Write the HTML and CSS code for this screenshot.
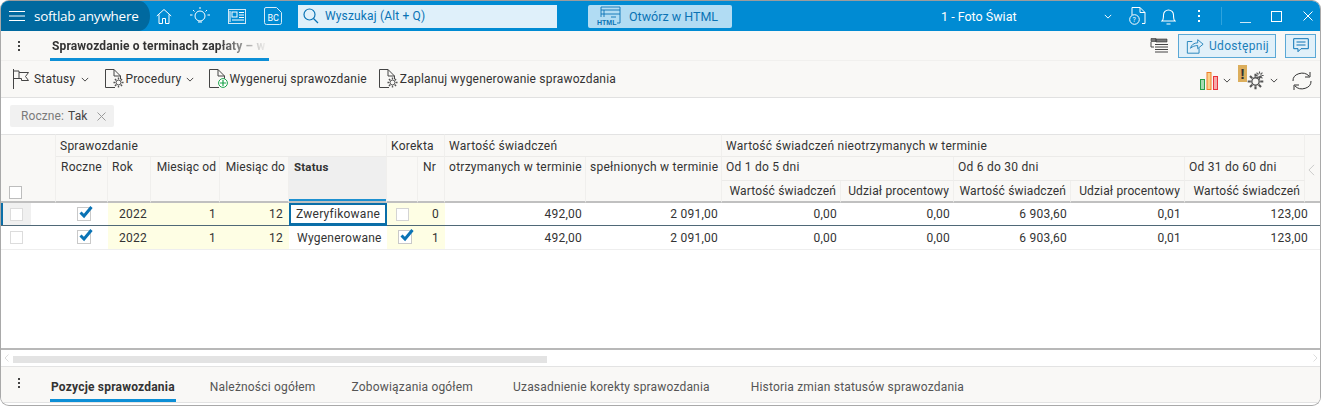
FILE: index.html
```html
<!DOCTYPE html>
<html lang="pl">
<head>
<meta charset="utf-8">
<title>Sprawozdanie o terminach zapłaty</title>
<link rel="stylesheet" href="styles.css">
</head>
<body>
<svg class="defs" width="0" height="0">
  <symbol id="cb-on" viewBox="0 0 18 18">
    <rect x="1.5" y="3.5" width="13" height="13" fill="#fff" stroke="#c9c9c9"/>
    <path d="M4.5 8.500l3.500 3.500L15.500 3" fill="none" stroke="#0a73b5" stroke-width="3"/>
  </symbol>
  <symbol id="chev" viewBox="0 0 10 6">
    <path d="M1 1l4 4 4-4" fill="none" stroke="currentColor" stroke-width="1.2"/>
  </symbol>
  <symbol id="doc" viewBox="0 0 18 20">
    <path d="M10 18.500H.5V.5H9L15.500 7v3M9 .5V7h6.500" fill="none" stroke="#444" stroke-width="1"/>
  </symbol>
  <symbol id="gear" viewBox="0 0 12 12">
    <circle cx="6" cy="6" r="2.600" fill="none" stroke="#555" stroke-width="1"/>
    <path d="M6 .5v2.200M6 9.300v2.200M.5 6h2.200M9.300 6h2.200M2.100 2.100l1.600 1.600M8.300 8.300l1.600 1.600M2.100 9.900l1.600-1.600M8.300 3.700l1.600-1.600" stroke="#555" stroke-width="1.500"/>
  </symbol>
</svg>

<div class="window">
  <header class="titlebar">
    <div class="brand">
      <svg class="burger" width="16" height="12" viewBox="0 0 16 12"><path d="M0 1.500h16M0 6h16M0 10.500h16" stroke="#fff" stroke-width="1.200"/></svg>
      <span class="brand-name">softlab anywhere</span>
    </div>
    <nav class="nav-icons">
      <svg class="ni ni-home" width="16" height="17" viewBox="0 0 16 17"><path d="M.8 8L8 1.500 15.200 8M3 6.500v9h3.500v-5h3v5H13v-9" fill="none" stroke="#fff"/></svg>
      <svg class="ni ni-bulb" width="20" height="18" viewBox="0 0 20 18"><circle cx="10" cy="9" r="5" fill="none" stroke="#fff"/><path d="M8 15h4M10 0v2M3 3l1.500 1.500M17 3l-1.500 1.500M0 8h2.500M17.500 8H20" stroke="#fff"/></svg>
      <svg class="ni ni-news" width="18" height="15" viewBox="0 0 18 15"><rect x=".5" y=".5" width="17" height="14" fill="none" stroke="#cfe8f6"/><rect x="4" y="3" width="5" height="5" fill="none" stroke="#fff"/><path d="M2 2v11M11 3.500h5M11 6h5M11 8.500h5M4 11h12" stroke="#fff"/></svg>
      <svg class="ni ni-bc" width="18" height="18" viewBox="0 0 18 18"><path d="M2 .5h10.500l5 5v10a2 2 0 0 1-2 2h-13a2 2 0 0 1-2-2V2A1.500 1.500 0 0 1 2 .5z" fill="none" stroke="#d5ecf8"/><text x="3.500" y="14" class="bc-text">BC</text></svg>
    </nav>
    <div class="search">
      <svg width="16" height="16" viewBox="0 0 16 16"><circle cx="6.500" cy="6.500" r="5.500" fill="none" stroke="#0a73b5" stroke-width="1.200"/><path d="M10.500 10.500L15 15" stroke="#0a73b5" stroke-width="1.200"/></svg>
      <span>Wyszukaj (Alt + Q)</span>
    </div>
    <div class="html-btn">
      <svg width="24" height="20" viewBox="0 0 24 20"><path d="M4 11V1h19v16h-3M4 4h19M7 4v7M4 8h19M14 11h5" fill="none" stroke="#0a73b5" stroke-width=".9"/><text x="0" y="19" class="html-text">HTML</text></svg>
      <span>Otwórz w HTML</span>
    </div>
    <div class="company">1 - Foto Świat</div>
    <div class="win-tools">
      <svg class="company-chev" width="8" height="5"><use href="#chev"/></svg>
      <svg class="wt-doc" width="17" height="18" viewBox="0 0 17 18"><path d="M3 8V.5h8l5 5v11h-3M11 .5v5h5" fill="none" stroke="#fff"/><circle cx="5.500" cy="12.500" r="4.800" fill="none" stroke="#fff"/><text x="3.600" y="15.200" class="q-text">?</text></svg>
      <svg class="wt-bell" width="15" height="19" viewBox="0 0 15 19"><path d="M1 14c1.500-1 1.500-3 1.500-6a5 5 0 0 1 10 0c0 3 0 5 1.500 6H1zM5.500 17h4" fill="none" stroke="#fff" stroke-width="1.100"/></svg>
      <span class="wt-dots"></span>
      <span class="wt-sep"></span>
      <svg class="wt-min" width="11" height="11" viewBox="0 0 11 11"><path d="M0 10.500h11" stroke="#cfe8f6"/></svg>
      <svg class="wt-max" width="11" height="11" viewBox="0 0 11 11"><rect x=".5" y=".5" width="10" height="10" fill="none" stroke="#fff"/></svg>
      <svg class="wt-close" width="10" height="10" viewBox="0 0 10 10"><path d="M.5.500l9 9M9.500.500l-9 9" stroke="#fff"/></svg>
    </div>
  </header>

  <div class="tabrow">
    <span class="vdots vdots-top"></span>
    <div class="doc-tab"><span class="doc-tab-text">Sprawozdanie o terminach zapłaty – w</span></div>
    <div class="tabrow-right">
      <svg class="list-ic" width="18" height="15" viewBox="0 0 18 15"><path d="M1 .5h5v3H1zM6 1h11v3H6z" fill="#777" stroke="#333" stroke-width=".6"/><path d="M1 4v5h3M5 6.500h13M5 9h13M5 11.500h13M5 14h13" fill="none" stroke="#444"/></svg>
      <button class="share-btn">
        <svg width="18" height="16" viewBox="0 0 20 17"><path d="M7 3.500H1.500v13h13V11" fill="none" stroke="#1b7fb9"/><path d="M5 11c1-4 4-6 8-6V1.500l6 5-6 5V8c-3 0-6 1-8 3z" fill="none" stroke="#1b7fb9"/></svg>
        <span>Udostępnij</span>
      </button>
      <button class="chat-btn">
        <svg width="16" height="15" viewBox="0 0 16 15"><path d="M.7.700h14.600v10H8l-3 3v-3H.7z" fill="none" stroke="#0a73b5"/><path d="M3.500 4h9M3.500 7h9" stroke="#0a73b5"/></svg>
      </button>
    </div>
  </div>

  <div class="toolbar">
    <div class="tb-item tb-statusy">
      <svg width="18" height="20" viewBox="0 0 18 20"><path d="M1.500 0v20M1.500 2h5.500v1.500h9.500l-3 4 3 4H9.500V9.500H1.500M7 3.500v6" fill="none" stroke="#444"/></svg>
      <span class="tb-label">Statusy</span>
      <svg class="tb-chev" width="8" height="5"><use href="#chev"/></svg>
    </div>
    <div class="tb-item tb-proc">
      <span class="doc-ic"><svg width="18" height="20"><use href="#doc"/></svg><svg class="doc-badge" width="11" height="11"><use href="#gear"/></svg></span>
      <span class="tb-label">Procedury</span>
      <svg class="tb-chev" width="8" height="5"><use href="#chev"/></svg>
    </div>
    <div class="tb-item tb-gen">
      <span class="doc-ic"><svg width="18" height="20"><use href="#doc"/></svg><svg class="doc-badge" width="10" height="10" viewBox="0 0 10 10"><circle cx="5" cy="5" r="4.400" fill="#fff" stroke="#1aa34a"/><path d="M5 2v6M2 5h6" stroke="#1aa34a" stroke-width="1.200"/></svg></span>
      <span class="tb-label">Wygeneruj sprawozdanie</span>
    </div>
    <div class="tb-item tb-plan">
      <span class="doc-ic"><svg width="18" height="20"><use href="#doc"/></svg><svg class="doc-badge" width="11" height="11"><use href="#gear"/></svg></span>
      <span class="tb-label">Zaplanuj wygenerowanie sprawozdania</span>
    </div>
    <div class="tb-right">
      <svg class="bars" width="18" height="18" viewBox="0 0 18 18"><rect x=".5" y="7.500" width="4" height="10" fill="#a5dbb3" stroke="#27a048"/><rect x="7" y=".5" width="4" height="17" fill="#fbd08a" stroke="#ee7f2a"/><rect x="13.500" y="4.500" width="4" height="13" fill="#f7a8a8" stroke="#e8323c"/></svg>
      <svg class="tb-chev chev-bars" width="8" height="5"><use href="#chev"/></svg>
      <span class="alert-ic">
        <span class="alert-mark">!</span>
        <svg class="gear-big" width="17" height="17"><use href="#gear"/></svg>
        <svg class="gear-small" width="9" height="9"><use href="#gear"/></svg>
      </span>
      <svg class="tb-chev chev-alert" width="8" height="5"><use href="#chev"/></svg>
      <svg class="refresh" width="20" height="20" viewBox="0 0 20 20"><path d="M1 10a9 7.500 0 0 1 16-5M19 10a9 7.500 0 0 1-16 5" fill="none" stroke="#333"/><path d="M18 1v5h-5M2 19v-5h5" fill="none" stroke="#333"/></svg>
    </div>
  </div>

  <div class="filters">
    <div class="chip"><span class="chip-key">Roczne:</span> <span class="chip-val">Tak</span>
      <svg width="9" height="9" viewBox="0 0 9 9"><path d="M.5.500l8 8M8.500.500l-8 8" stroke="#9a9a9a"/></svg>
    </div>
  </div>

  <div class="grid-area">
    <table class="grid">
      <colgroup>
        <col class="c30"><col class="c25"><col class="c52"><col class="c43"><col class="c69"><col class="c69"><col class="c98"><col class="c31"><col class="c27"><col class="c141"><col class="c136"><col class="c119"><col class="c113"><col class="c117"><col class="c114"><col class="c120"><col class="c15">
      </colgroup>
      <thead>
        <tr class="h1">
          <th colspan="2" rowspan="3" class="selhead"><span class="cb cb-head"></span></th>
          <th colspan="5">Sprawozdanie</th>
          <th colspan="2">Korekta</th>
          <th colspan="2">Wartość świadczeń</th>
          <th colspan="5">Wartość świadczeń nieotrzymanych w terminie</th>
          <th rowspan="3" class="scroll-cell"><svg width="7" height="12" viewBox="0 0 8 14"><path d="M7 1L1 7l6 6" fill="none" stroke="#c4c4c4"/></svg></th>
        </tr>
        <tr class="h2">
          <th rowspan="2" class="ct">Roczne</th>
          <th rowspan="2">Rok</th>
          <th rowspan="2" class="ar tight">Miesiąc od</th>
          <th rowspan="2" class="ar tight">Miesiąc do</th>
          <th rowspan="2" class="status-head">Status</th>
          <th rowspan="2"></th>
          <th rowspan="2" class="ar nr-head">Nr</th>
          <th rowspan="2">otrzymanych w terminie</th>
          <th rowspan="2">spełnionych w terminie</th>
          <th colspan="2">Od 1 do 5 dni</th>
          <th colspan="2">Od 6 do 30 dni</th>
          <th>Od 31 do 60 dni</th>
        </tr>
        <tr class="h3">
          <th class="ar">Wartość świadczeń</th>
          <th class="ar">Udział procentowy</th>
          <th class="ar">Wartość świadczeń</th>
          <th class="ar">Udział procentowy</th>
          <th class="ar">Wartość świadczeń</th>
        </tr>
      </thead>
      <tbody>
        <tr class="row-active">
          <td class="sel sel-active"><span class="cb"></span></td>
          <td></td>
          <td class="ct"><svg class="cbx" width="18" height="18"><use href="#cb-on"/></svg></td>
          <td class="ar yel">2022</td>
          <td class="ar yel">1</td>
          <td class="ar yel pad6">12</td>
          <td class="status-focus">Zweryfikowane</td>
          <td class="ct yel"><span class="cb cb-row"></span></td>
          <td class="ar yel pad6">0</td>
          <td class="ar">492,00</td>
          <td class="ar">2 091,00</td>
          <td class="ar">0,00</td>
          <td class="ar">0,00</td>
          <td class="ar">6 903,60</td>
          <td class="ar">0,01</td>
          <td colspan="2" class="ar lastcell">123,00</td>
        </tr>
        <tr class="row-plain">
          <td class="sel"><span class="cb"></span></td>
          <td></td>
          <td class="ct"><svg class="cbx" width="18" height="18"><use href="#cb-on"/></svg></td>
          <td class="ar yel">2022</td>
          <td class="ar yel">1</td>
          <td class="ar yel pad6">12</td>
          <td class="status">Wygenerowane</td>
          <td class="ct yel"><svg class="cbx" width="18" height="18"><use href="#cb-on"/></svg></td>
          <td class="ar yel pad6">1</td>
          <td class="ar">492,00</td>
          <td class="ar">2 091,00</td>
          <td class="ar">0,00</td>
          <td class="ar">0,00</td>
          <td class="ar">6 903,60</td>
          <td class="ar">0,01</td>
          <td colspan="2" class="ar lastcell">123,00</td>
        </tr>
      </tbody>
    </table>
  </div>

  <div class="hscroll">
    <svg width="5" height="8" viewBox="0 0 5 8"><path d="M4.500.500L1 4l3.500 3.500" fill="none" stroke="#ddd"/></svg>
    <div class="hscroll-track"><div class="hscroll-thumb"></div></div>
    <svg width="5" height="8" viewBox="0 0 5 8"><path d="M.5.500L4 4 .5 7.500" fill="none" stroke="#ddd"/></svg>
  </div>

  <div class="subtabs">
    <span class="vdots vdots-bottom"></span>
    <span class="subtab subtab-active">Pozycje sprawozdania</span>
    <span class="subtab subtab-receivables">Należności ogółem</span>
    <span class="subtab subtab-liabilities">Zobowiązania ogółem</span>
    <span class="subtab subtab-reason">Uzasadnienie korekty sprawozdania</span>
    <span class="subtab">Historia zmian statusów sprawozdania</span>
  </div>
</div>
</body>
</html>
```
FILE: styles.css
```css
* { box-sizing: border-box; }
html, body { margin: 0; padding: 0; height: 406px; overflow: hidden; background: #fff; }
body { font-family: Roboto, "Liberation Sans", sans-serif; font-size: 12px; color: #333; }
.defs { position: absolute; }
svg { display: block; flex: none; }
button { font: inherit; margin: 0; }

.window {
  height: 406px;
  border: 1px solid #a9a9a9;
  border-top-color: #9c9c9c;
  border-radius: 9px;
  overflow: hidden;
  display: flex;
  flex-direction: column;
  background: #fff;
}

/* title bar */
.titlebar { height: 30px; flex: none; background: #008bd3; display: flex; align-items: center; color: #fff; }
.brand {
  width: 149px; height: 30px; flex: none;
  background: #00699f;
  border-radius: 0 22px 22px 0 / 0 30px 30px 0;
  display: flex; align-items: center; padding-left: 8px;
}
.brand-name { font-family: "Open Sans", sans-serif; font-size: 13.500px; margin-left: 9px; letter-spacing: -.25px; white-space: nowrap; }
.nav-icons { display: flex; align-items: center; width: 148px; flex: none; padding-left: 6px; }
.ni-bulb { margin-left: 18px; }
.ni-news { margin-left: 18px; }
.ni-bc { margin-left: 18px; }
.bc-text { font: 9px Roboto, sans-serif; fill: #fff; }
.search {
  width: 259px; height: 23px; flex: none; background: #dff0fa;
  display: flex; align-items: center; padding-left: 5px; gap: 6px;
  color: #0a73b5; font-size: 12px; letter-spacing: .15px;
}
.html-btn {
  width: 144px; height: 23px; flex: none; margin-left: 31px; background: #b1dcf3;
  border-radius: 2px; display: flex; align-items: center; padding-left: 9px; gap: 8px;
  color: #0a73b5; font-size: 12.500px;
}
.html-text { font: bold 7px "Liberation Sans", sans-serif; fill: #0a73b5; }
.company { width: 418px; flex: none; padding-left: 209px; font-size: 12.500px; color: #fff; }
.win-tools { display: flex; align-items: center; flex: 1; }
.company-chev { color: #fff; margin-left: -46px; }
.wt-doc { margin-left: 17px; }
.wt-bell { margin-left: 15px; }
.wt-dots { width: 2px; height: 2px; margin-left: 22px; background: #fff; box-shadow: 0 -5px 0 #fff, 0 5px 0 #fff; }
.wt-sep { width: 1px; height: 18px; margin-left: 21px; background: #2ea3dd; }
.wt-min { margin-left: 18px; margin-top: 3px; }
.wt-max { margin-left: 20px; }
.wt-close { margin-left: 21px; }
.q-text { font: 7px Roboto, sans-serif; fill: #fff; }

/* document tab row */
.tabrow { height: 30px; flex: none; background: #f9f8f6; display: flex; align-items: center; border-bottom: 1px solid #f1f0ee; }
.vdots { display: block; flex: none; width: 2px; height: 2px; background: #444; box-shadow: 0 -4px 0 #444, 0 4px 0 #444; }
.vdots-top { margin-left: 17px; }
.doc-tab {
  width: 219px; height: 30px; margin-left: 30px; flex: none; overflow: hidden; padding: 8px 0 0 2px;
  border-bottom: 3px solid #0d8fd6; white-space: nowrap;
}
.doc-tab-text {
  display: block; font-weight: 700; font-size: 12px; letter-spacing: .15px; color: #333; line-height: 15px;
  -webkit-mask-image: linear-gradient(90deg, #000 165px, transparent 216px);
  mask-image: linear-gradient(90deg, #000 165px, transparent 216px);
}
.tabrow-right { margin-left: auto; display: flex; align-items: center; padding-right: 4px; }
.share-btn {
  width: 98px; height: 24px; margin-left: 10px; background: #e1f0f9; border: 1px solid #5aa8d6;
  display: flex; align-items: center; padding: 0 0 0 7px; gap: 5px; color: #1b7fb9; font-size: 12px; letter-spacing: .3px;
}
.chat-btn {
  width: 31px; height: 24px; margin-left: 9px; background: #e1f0f9; border: 1px solid #5aa8d6;
  display: flex; align-items: center; justify-content: center; padding: 0;
}

/* toolbar */
.toolbar { height: 37px; flex: none; background: #f9f8f6; border-bottom: 1px solid #e1e1e1; display: flex; align-items: center; }
.tb-item { display: flex; align-items: center; color: #333; }
.tb-label { font-size: 12px; letter-spacing: .2px; white-space: nowrap; }
.tb-chev { color: #444; }
.tb-statusy { margin-left: 11px; }
.tb-statusy .tb-label { margin-left: 4px; }
.tb-statusy .tb-chev { margin-left: 6px; }
.tb-proc { margin-left: 16px; }
.tb-proc .tb-label { margin-left: 2px; }
.tb-proc .tb-chev { margin-left: 5px; }
.tb-gen { margin-left: 15px; }
.tb-gen .tb-label { margin-left: 2px; }
.tb-plan { margin-left: 12px; }
.tb-plan .tb-label { margin-left: 3px; }
.doc-ic { position: relative; display: block; width: 18px; height: 20px; }
.doc-badge { position: absolute; right: -1px; bottom: 1px; }
.tb-right { margin-left: auto; display: flex; align-items: center; padding-right: 8px; }
.bars { margin-top: 3px; }
.chev-bars { margin-left: 5px; margin-top: 2px; }
.alert-ic { position: relative; display: block; width: 26px; height: 26px; margin-left: 7px; margin-top: -2px; }
.alert-mark {
  position: absolute; left: 0; top: 0; width: 9px; height: 17px; background: #dcae5c; color: #333;
  font: 900 15px/17px "Liberation Sans", sans-serif; text-align: center;
}
.gear-big { position: absolute; left: 9px; top: 8px; }
.gear-small { position: absolute; left: 17px; top: 6px; }
.chev-alert { margin-left: 6px; margin-top: 2px; }
.refresh { margin-left: 14px; margin-top: 4px; }

/* filter row */
.filters { height: 36px; flex: none; padding: 7px 0 0 9px; background: #fff; }
.chip {
  width: 104px; height: 22px; background: #f1f1f1; border-radius: 2px; display: flex; align-items: center;
  padding-left: 11px; gap: 4px; font-size: 12px; letter-spacing: .1px; color: #7a7a7a;
}
.chip-val { color: #444; }
.chip svg { margin-left: 5px; }

/* grid */
.grid-area { flex: 1; min-height: 0; overflow: hidden; border-bottom: 2px solid #b8b8b8; background: #fff; }
.grid { width: 1319px; table-layout: fixed; border-collapse: separate; border-spacing: 0; font-size: 12px; letter-spacing: .25px; color: #333; }
.c30 { width: 30px; } .c25 { width: 25px; } .c52 { width: 52px; } .c43 { width: 43px; } .c69 { width: 69px; }
.c98 { width: 98px; } .c31 { width: 31px; } .c27 { width: 27px; } .c141 { width: 141px; } .c136 { width: 136px; }
.c119 { width: 119px; } .c113 { width: 113px; } .c117 { width: 117px; } .c114 { width: 114px; } .c120 { width: 120px; } .c15 { width: 15px; }

.grid th {
  background: #f9f8f6; font-weight: 400; text-align: left; vertical-align: top; white-space: nowrap; overflow: hidden;
  padding: 4px 4px 0; border-right: 1px solid #f0efed; border-bottom: 1px solid #ecebe9; line-height: 14px;
}
.grid thead .h1 th { height: 23px; border-top: 1px solid #e3e3e3; }
.grid thead .h2 th { height: 24px; padding-top: 3px; }
.grid thead .h3 th { height: 22px; padding-top: 3px; letter-spacing: .15px; border-bottom: 2px solid #c0c0c0; }
.grid thead th[rowspan="2"], .grid thead th[rowspan="3"] { border-bottom: 2px solid #c0c0c0; }
.grid th.ar { text-align: right; }
.grid th.tight { letter-spacing: .1px; padding-right: 3px; }
.grid th.ct { text-align: center; padding-left: 0; padding-right: 0; }
.grid th.nr-head { padding-right: 8px; }
.selhead { position: relative; }
.cb { display: block; width: 13px; height: 13px; background: #fff; border: 1px solid #d4d4d4; }
.cb-head { position: absolute; left: 8px; bottom: 2px; border-color: #bdbdbd; }
.grid th.status-head { background: #efefef; font-weight: 700; font-size: 11.500px; letter-spacing: .2px; padding-left: 5px; box-shadow: inset 0 -2px 0 #1d90d0; }
.grid th.scroll-cell { padding: 29px 0 0 3px; border-right: 0; }

.grid td { height: 23px; padding: 0 4px; white-space: nowrap; border-bottom: 1px solid #eeeeee; line-height: 14px; }
.row-plain td { height: 24px; padding-top: 1px; }
.grid td.ar { text-align: right; }
.grid td.pad6 { padding-right: 6px; }
.grid td.lastcell { padding-right: 12px; }
.grid .yel { background: #fefee4; }
.grid td.ct { padding: 0; }
.cbx { margin: 0 auto 3px; position: relative; left: 3px; }
.cb-row { margin: 0 auto; }
.grid td.sel { padding: 0 0 0 9px; }
.sel .cb { border-color: #dcdcdc; }
.grid td.sel-active { background: #f0f0f0; box-shadow: inset 2px 0 0 #0a6ea8; }
.row-active td { border-bottom-color: #4f6877; }
.grid td.status { padding-left: 8px; }
.grid td.status-focus { padding-left: 7px; box-shadow: inset 0 0 0 2px #0a6ea8; border-bottom-color: #0a6ea8; }

/* horizontal scroll */
.hscroll { height: 17px; flex: none; display: flex; align-items: center; gap: 4px; padding: 0 2px 0 3px; border-bottom: 1px solid #e3e3e3; background: #fff; }
.hscroll-track { flex: 1; height: 7px; margin-top: 3px; }
.hscroll-thumb { width: 534px; height: 7px; background: #e3e3e3; }

/* bottom tabs */
.subtabs { height: 36px; flex: none; margin-bottom: 2px; background: #f9f8f6; border-bottom: 1px solid #e3e3e3; display: flex; align-items: flex-start; }
.subtabs .vdots { align-self: center; margin-left: 17px; margin-right: 30px; margin-top: -3px; }
.subtab { display: block; padding: 13px 1px 0; margin-right: 36px; height: 35px; color: #555; font-size: 12px; letter-spacing: .18px; white-space: nowrap; }
.subtab-active { font-weight: 700; color: #333; letter-spacing: .2px; margin-right: 33px; border-bottom: 3px solid #0d8fd6; }
.subtab-receivables { margin-right: 34px; }
.subtab-liabilities { margin-right: 38px; }
.subtab-reason { margin-right: 39px; }
```
